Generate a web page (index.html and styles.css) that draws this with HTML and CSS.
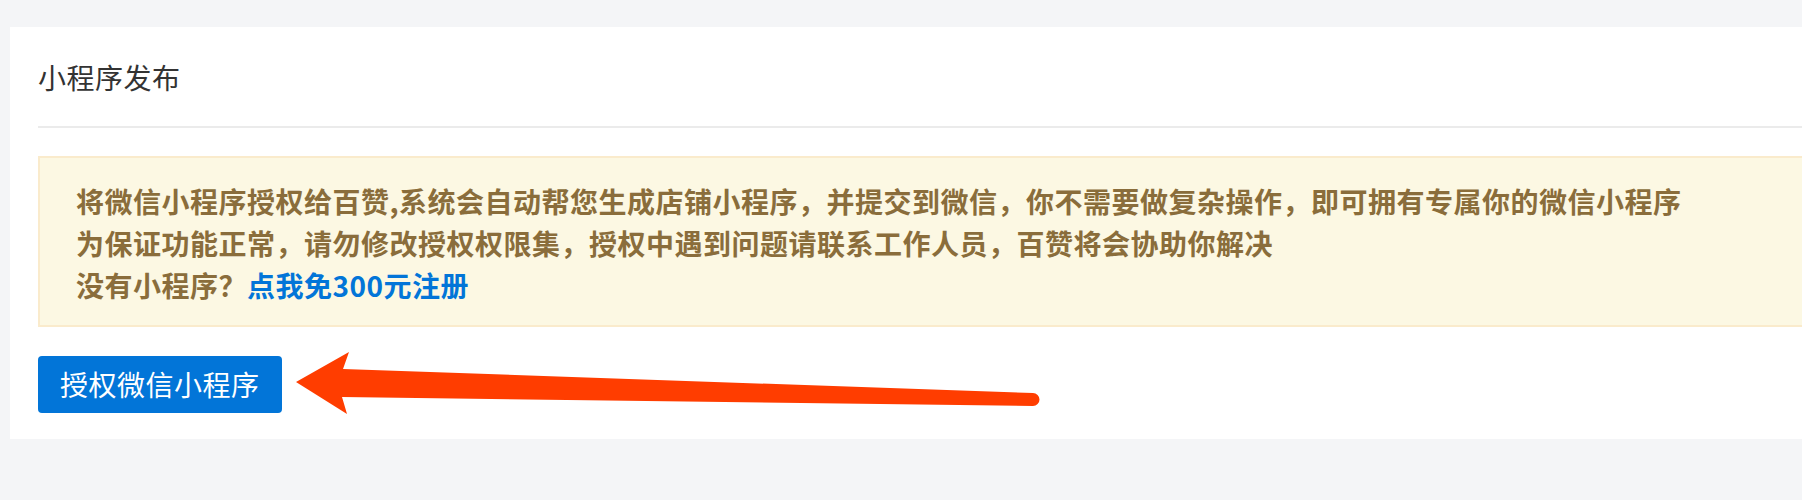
FILE: index.html
```html
<!DOCTYPE html>
<html lang="zh">
<head>
<meta charset="UTF-8">
<title>小程序发布</title>
<link rel="stylesheet" href="styles.css">
</head>
<body>

<div class="card">
  <h3 class="card-title">小程序发布</h3>

  <div class="alert">
    <p>将微信小程序授权给百赞,系统会自动帮您生成店铺小程序，并提交到微信，你不需要做复杂操作，即可拥有专属你的微信小程序</p>
    <p>为保证功能正常，请勿修改授权权限集，授权中遇到问题请联系工作人员，百赞将会协助你解决</p>
    <p>没有小程序？<a href="#">点我免300元注册</a></p>
  </div>

  <button class="btn-primary">授权微信小程序</button>
</div>

<!-- 标注箭头 -->
<svg class="mark" width="1802" height="500" viewBox="0 0 1802 500">
  <path d="M296 382 L349 352 L343 369 L1033 393 A6.5 6.5 0 0 1 1033 406 L342 397 L347 414 Z" fill="#ff3d00"/>
</svg>

</body>
</html>
```

FILE: styles.css
```css
*{margin:0;padding:0;box-sizing:border-box;font-family:"Noto Sans CJK SC","Liberation Sans",sans-serif;letter-spacing:.5px}
body{background:#f4f5f7;overflow:hidden;position:relative;height:500px}

.card{background:#fff;margin:27px 0 0 10px;padding:29px 0 26px 28px}
.card-title{font-size:28px;font-weight:400;line-height:42px;color:#333;padding-bottom:28px;border-bottom:2px solid #ebebeb}

.alert{margin-top:28px;background:#fcf8e3;border:2px solid #faebcc;border-right:0;padding:22px 36px 19px;color:#8a6d3b;font-size:28px;font-weight:700;line-height:42px}
.alert a{color:#0275d8;text-decoration:none}

.btn-primary{display:block;margin-top:29px;height:57px;padding:0 22px;border:none;border-radius:4px;background:#0275d8;color:#fff;font-size:28px;line-height:57px;cursor:pointer}

.mark{position:absolute;left:0;top:0;pointer-events:none}
```
